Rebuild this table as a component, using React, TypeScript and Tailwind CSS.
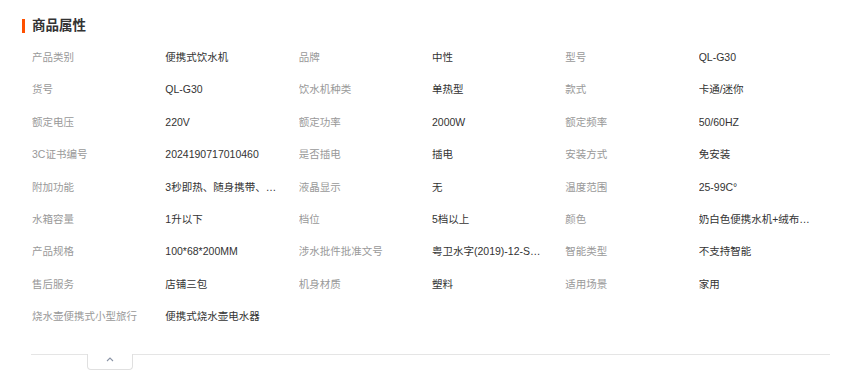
import React from "react";

const rows: [string, string][] = [
  ["产品类别", "便携式饮水机"],
  ["品牌", "中性"],
  ["型号", "QL-G30"],
  ["货号", "QL-G30"],
  ["饮水机种类", "单热型"],
  ["款式", "卡通/迷你"],
  ["额定电压", "220V"],
  ["额定功率", "2000W"],
  ["额定频率", "50/60HZ"],
  ["3C证书编号", "2024190717010460"],
  ["是否插电", "插电"],
  ["安装方式", "免安装"],
  ["附加功能", "3秒即热、随身携带、便捷小巧"],
  ["液晶显示", "无"],
  ["温度范围", "25-99C°"],
  ["水箱容量", "1升以下"],
  ["档位", "5档以上"],
  ["颜色", "奶白色便携水机+绒布收纳袋"],
  ["产品规格", "100*68*200MM"],
  ["涉水批件批准文号", "粤卫水字(2019)-12-S0027"],
  ["智能类型", "不支持智能"],
  ["售后服务", "店铺三包"],
  ["机身材质", "塑料"],
  ["适用场景", "家用"],
  ["烧水壶便携式小型旅行", "便携式烧水壶电水器"],
];

export default function App() {
  return (
    <div
      className="w-[841px] h-[381px] bg-white overflow-hidden"
      style={{ fontFamily: '"Liberation Sans", "Noto Sans CJK SC", sans-serif' }}
    >
      {/* Title */}
      <div className="flex items-center gap-[7px] pl-[22px] pt-[17px]">
        <span className="w-[3px] h-[14px] bg-[#ff5000]" />
        <h2 className="text-[13.5px] leading-[18px] font-bold text-[#333]">商品属性</h2>
      </div>

      {/* Attribute grid */}
      <div className="grid grid-cols-6 w-[800px] ml-[32px] mt-[6px]">
        {rows.map(([label, value], i) => (
          <React.Fragment key={i}>
            <div className="h-[32.4px] leading-[33px] text-[10.5px] text-[#999] truncate pr-[4px]">{label}</div>
            <div className="h-[32.4px] leading-[33px] text-[10.5px] text-[#333] truncate pr-[22px]">{value}</div>
          </React.Fragment>
        ))}
      </div>

      {/* Divider with collapse tab */}
      <div className="relative ml-[31px] mt-[21px] w-[799px] border-t border-[#e5e5e5]">
        <div className="absolute left-[56px] top-[-1px] w-[46px] h-[16px] bg-white border border-t-0 border-[#e0e0e0] rounded-b-[4px] flex items-center justify-center">
          <svg width="8" height="5" viewBox="0 0 8 5" fill="none" className="mb-[3px]">
            <path d="M1 4L4 1L7 4" stroke="#8a94a6" strokeWidth="1.1" />
          </svg>
        </div>
      </div>
    </div>
  );
}
